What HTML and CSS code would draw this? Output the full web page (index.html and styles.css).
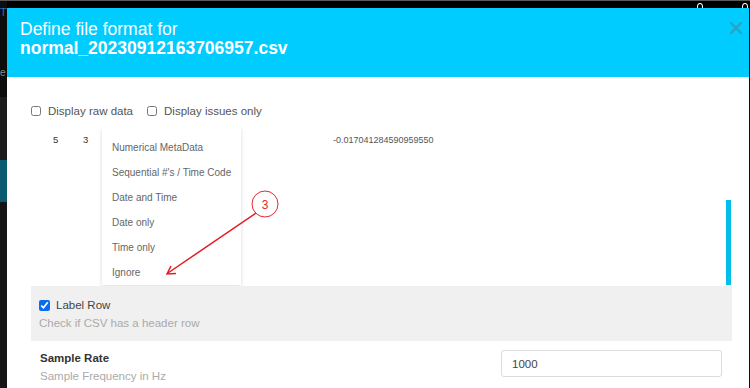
FILE: index.html
```html
<!DOCTYPE html>
<html lang="en">
<head>
<meta charset="utf-8">
<title>Define file format</title>
<link rel="stylesheet" href="styles.css">
</head>
<body>
<div class="app">
  <div class="sidebar">
    <div class="sb-top"><span class="logo">T</span><span class="sb-e">e</span></div>
    <div class="sb-mid"></div>
    <div class="sb-teal"></div>
    <div class="sb-bottom"></div>
  </div>
  <div class="rest">
    <div class="topbar"><span class="tb-icon"></span><span class="tb-icon"></span></div>
  </div>
</div>

<div class="modal">
  <div class="mhead">
    <h1 class="title">Define file format for <b>normal_20230912163706957.csv</b></h1>
    <svg class="close" width="12" height="12" viewBox="0 0 12 12"><path d="M1 1L11 11M11 1L1 11" stroke="#2ba2c6" stroke-width="2.4" stroke-linecap="square"/></svg>
  </div>
  <div class="mbody">
    <div class="opts">
      <label class="opt"><input type="checkbox" class="cb"> Display raw data</label>
      <label class="opt"><input type="checkbox" class="cb"> Display issues only</label>
    </div>
    <div class="grid-area">
      <div class="rows">
        <div class="row"><span class="idx">5</span><span class="idx">3</span><span>-0.017041284590959550</span></div>
        <ul class="menu">
          <li>Numerical MetaData</li>
          <li>Sequential #'s / Time Code</li>
          <li>Date and Time</li>
          <li>Date only</li>
          <li>Time only</li>
          <li>Ignore</li>
        </ul>
      </div>
      <div class="scroll"><div class="thumb"></div></div>
    </div>
    <div class="labelrow">
      <label class="lr-line"><input type="checkbox" class="cb2" checked> Label Row</label>
      <div class="desc">Check if CSV has a header row</div>
    </div>
    <div class="field">
      <div>
        <div class="fname">Sample Rate</div>
        <div class="desc">Sample Frequency in Hz</div>
      </div>
      <input class="finput" type="text" value="1000">
    </div>
  </div>
</div>

<svg class="annot" width="750" height="388" viewBox="0 0 750 388">
  <circle cx="265" cy="204" r="13" fill="none" stroke="#e8262a" stroke-width="1"/>
  <text x="265" y="208.5" text-anchor="middle" font-family="Liberation Sans, Arial, sans-serif" font-size="12" fill="#e8262a">3</text>
  <line x1="256" y1="213" x2="168" y2="273" stroke="#e51c23" stroke-width="1.5"/>
  <polyline points="171,266 167,274 176,273.4" fill="none" stroke="#e51c23" stroke-width="1.5"/>
</svg>
</body>
</html>
```
FILE: styles.css
```css
html, body {
  margin: 0;
  padding: 0;
}
body {
  background: #111;
  font-family: "Liberation Sans", Arial, sans-serif;
  width: 750px;
  height: 388px;
  overflow: hidden;
  position: relative;
}
.app {
  display: flex;
  height: 388px;
}
.sidebar {
  width: 7px;
  display: flex;
  flex-direction: column;
  overflow: hidden;
}
.sb-top {
  height: 97px;
  background: #0d0d0d;
  border-top: 1px solid #5a5a5a;
  box-sizing: border-box;
  overflow: hidden;
}
.logo {
  display: block;
  color: #1f74c0;
  font-size: 11px;
  line-height: 14px;
  margin-top: 4px;
}
.sb-e {
  display: block;
  color: #8a8a8a;
  font-size: 10px;
  line-height: 12px;
  margin-top: 48px;
}
.sb-mid {
  height: 63px;
  background: #1c1c1c;
}
.sb-teal {
  height: 42px;
  background: #0b5b70;
}
.sb-bottom {
  flex: 1;
  background: #151515;
}
.rest {
  flex: 1;
  background: #111;
}
.topbar {
  height: 8px;
  box-sizing: border-box;
  border-top: 1px solid #5a5a5a;
  background: #000;
  display: flex;
  padding-left: 690px;
  gap: 39px;
}
.tb-icon {
  flex: none;
  width: 4px;
  height: 6px;
  border: 1.5px solid #fff;
  border-radius: 50%;
  margin-top: 2px;
}

.modal {
  position: absolute;
  top: 8px;
  left: 7px;
  width: 742px;
  height: 380px;
  background: #fff;
  overflow: hidden;
}
.mhead {
  background: #00ccff;
  height: 69px;
  box-sizing: border-box;
  padding: 12px 7px 0 13px;
  display: flex;
  justify-content: space-between;
  align-items: flex-start;
}
.title {
  margin: 0;
  color: #fff;
  font-size: 17.5px;
  line-height: 19px;
  font-weight: normal;
}
.title b {
  display: block;
  font-weight: bold;
}
.close {
  margin-top: 2px;
}
.mbody {
  padding: 27px 17px 0 24px;
}
.opts {
  display: flex;
  align-items: center;
  height: 14px;
  font-size: 11.5px;
  line-height: 14px;
  color: #555;
}
.opt {
  display: flex;
  align-items: center;
  gap: 7px;
  margin-right: 14px;
}
.cb {
  margin: 0;
  width: 10px;
  height: 10px;
}
.grid-area {
  margin-top: 10px;
  height: 158px;
  display: flex;
  overflow: hidden;
}
.rows {
  flex: 1;
  position: relative;
}
.row {
  display: grid;
  grid-template-columns: 30px 250px auto;
  padding: 6px 0 0 22px;
  font-size: 9px;
  line-height: 12px;
  color: #555;
}
.idx {
  color: #333;
  font-size: 9.5px;
}
.menu {
  position: absolute;
  left: 71px;
  top: 0;
  width: 139px;
  margin: 0;
  padding: 7px 0 0 0;
  list-style: none;
  background: #fff;
  box-shadow: 0 1px 4px rgba(0, 0, 0, 0.16);
  font-size: 10px;
  color: #666;
}
.menu li {
  line-height: 25px;
  padding-left: 10px;
}
.scroll {
  width: 5px;
  margin-right: 1px;
  display: flex;
  flex-direction: column;
  justify-content: flex-end;
}
.thumb {
  height: 85px;
  background: #00bde9;
  margin-bottom: 1px;
}
.labelrow {
  background: #f0f0f0;
  padding: 10px 8px 9px;
  font-size: 11.5px;
  line-height: 18px;
}
.lr-line {
  display: flex;
  align-items: center;
  gap: 6px;
  color: #444;
}
.cb2 {
  margin: 0;
  width: 11px;
  height: 11px;
  accent-color: #0a6cf0;
}
.desc {
  color: #aaa;
  font-size: 11.5px;
  line-height: 18px;
}
.field {
  display: flex;
  justify-content: space-between;
  align-items: flex-start;
  padding: 8px 10px 0 9px;
}
.fname {
  font-size: 11.5px;
  line-height: 18px;
  font-weight: bold;
  color: #333;
}
.finput {
  width: 221px;
  height: 27px;
  box-sizing: border-box;
  margin-top: 1px;
  border: 1px solid #dcdcdc;
  border-radius: 3px;
  padding: 0 10px;
  font-family: "Liberation Sans", Arial, sans-serif;
  font-size: 11.5px;
  color: #444;
}
.annot {
  position: absolute;
  top: 0;
  left: 0;
}
```
